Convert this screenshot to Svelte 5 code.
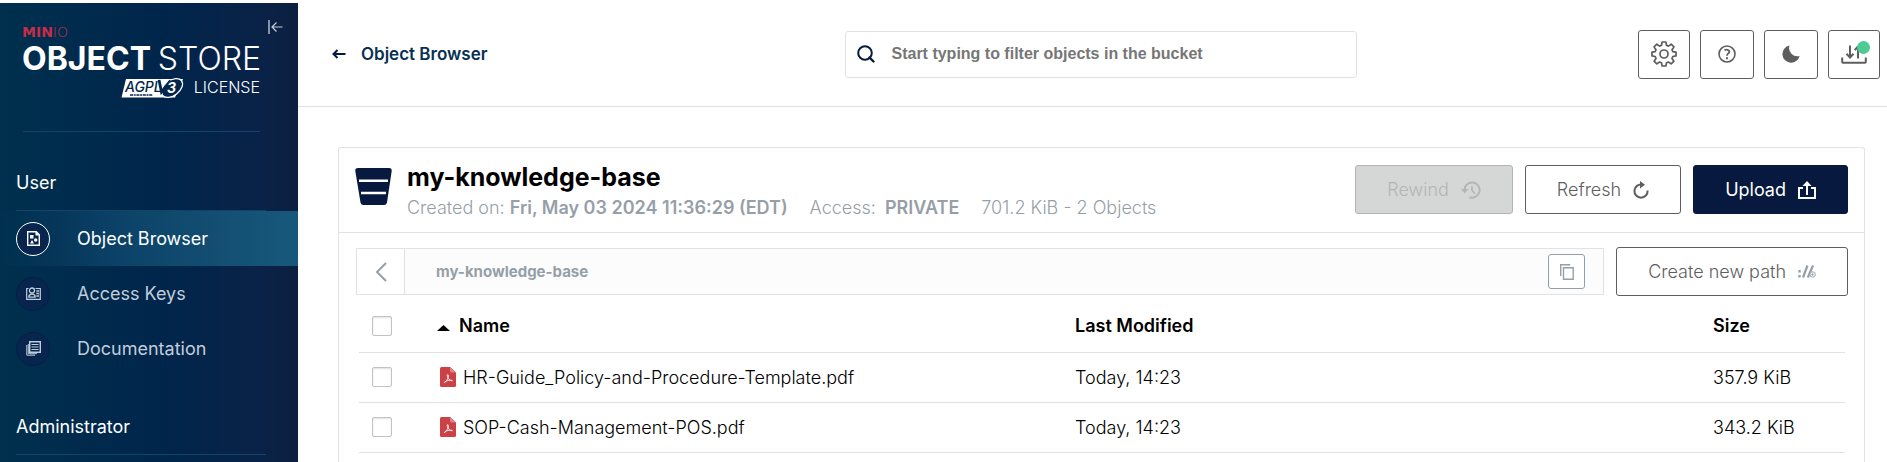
<script>
  const nav = [
    { label: 'Object Browser', icon: 'browser', active: true },
    { label: 'Access Keys', icon: 'keys', active: false },
    { label: 'Documentation', icon: 'docs', active: false }
  ];
  const files = [
    { name: 'HR-Guide_Policy-and-Procedure-Template.pdf', modified: 'Today, 14:23', size: '357.9 KiB' },
    { name: 'SOP-Cash-Management-POS.pdf', modified: 'Today, 14:23', size: '343.2 KiB' }
  ];
  let filter = $state('');
</script>

<div class="app">
  <aside class="sidebar">
    <div class="brand">
      <svg class="logo" viewBox="0 0 237 74" role="img" aria-label="MinIO Object Store, AGPLv3 License">
        <text x="-1" y="13" class="l-minio" fill="#c72c48"><tspan font-weight="700">MIN</tspan><tspan font-weight="200">IO</tspan></text>
        <text x="-1" y="46" class="l-big" font-weight="700">OBJECT</text>
        <text x="238" y="46" class="l-big" font-weight="300" text-anchor="end">STORE</text>
        <path d="M103 55h57l-8 18.500H98.500z" fill="#fff" />
        <ellipse cx="149" cy="64" rx="12" ry="7.500" transform="rotate(-38 149 64)" fill="#04264b" stroke="#fff" stroke-width="1.300" />
        <path d="M136 56l2.500 12 9-11.500" fill="none" stroke="#04264b" stroke-width="2.800" />
        <text x="102" y="68" class="l-agpl">AGPL</text>
        <text x="144" y="69" class="l-three">3</text>
        <path d="M107 71h23" stroke="#04264b" stroke-width="1.500" stroke-dasharray="3 .7 2 .7" />
        <text x="237" y="69" class="l-lic" text-anchor="end">LICENSE</text>
      </svg>
      <button class="collapse" aria-label="Collapse menu">
        <svg width="15" height="14" viewBox="0 0 15 14" fill="none" stroke="#c3ccd8"><path d="M1 0v14" stroke="#8493a8" stroke-width="2" /><path d="M14.500 7H4M8.500 2.500L4 7l4.500 4.500" stroke-width="1.200" /></svg>
      </button>
    </div>

    <h2>User</h2>
    <nav>
      {#each nav as item}
        <a href="#{item.icon}" class:active={item.active}>
          <span class="ring">
            {#if item.icon === 'browser'}
              <svg width="13" height="15" viewBox="0 0 13 15"><path d="M.7.700h8.600l3 3v10.600H.7z" fill="none" stroke="#fff" stroke-width="1.400" /><path d="M8.500.5v4h4M3 4h3.500v3.500H3zM3 12.500l2-3.500 2 3.500z" fill="#fff" /><circle cx="8.700" cy="9" r="1.700" fill="#fff" /></svg>
            {:else if item.icon === 'keys'}
              <svg width="15" height="13" viewBox="0 0 15 13" fill="none" stroke="#c1cddb"><path d="M2.500 1.500H.7v10.800h13.600V1.500H9.500" stroke-width="1.200" /><circle cx="6" cy="3.500" r="2.500" stroke-width="1.300" /><path d="M2.800 10.200c0-4 6.400-4 6.400 0z" stroke-width="1.300" /><path d="M10.300 4h2.700M10.300 6.500h2.700M10.300 9h2.700" stroke-width="1.700" /></svg>
            {:else}
              <svg width="15" height="15" viewBox="0 0 15 15" fill="none" stroke="#c1cddb"><path d="M3.700.700h10.600v10.600H3.700z" stroke-width="1.400" /><path d="M.8 4v10.200H9M2.300 3v9.700H11" stroke-width="1" /><path d="M5.500 3.500h7M5.500 6h7M5.500 8.500h7" stroke-width="1.200" /></svg>
            {/if}
          </span>
          {item.label}
        </a>
      {/each}
    </nav>

    <h2>Administrator</h2>
  </aside>

  <main>
    <header class="topbar">
      <a class="back" href="#browser">
        <svg width="14" height="10" viewBox="0 0 14 10" fill="none" stroke="#07193e" stroke-width="2"><path d="M13.500 5H2M5.500 1L1.500 5l4 4" /></svg>
        Object Browser
      </a>
      <label class="search">
        <svg width="18" height="18" viewBox="0 0 18 18" fill="none" stroke="#07193e" stroke-width="2"><circle cx="8" cy="8" r="6.800" /><path d="M12.500 12.500l4 4" stroke-width="2.400" stroke-linecap="round" /></svg>
        <input type="text" aria-label="Filter objects" placeholder="Start typing to filter objects in the bucket" bind:value={filter} />
      </label>
      <div class="tools">
        <button aria-label="Settings">
          <svg width="26" height="26" viewBox="0 0 26 26" fill="none" stroke="#5e5e5e" stroke-width="1.700" stroke-linejoin="round"><circle cx="13" cy="13" r="4" /><path d="M11.100 1h3.800l.6 3.300 1.900.8 2.800-1.900 2.700 2.700-1.900 2.800.8 1.900 3.200.6v3.700l-3.200.6-.8 1.900 1.900 2.800-2.700 2.700-2.800-1.900-1.900.8-.6 3.200h-3.800l-.6-3.200-1.900-.8-2.800 1.900-2.700-2.700L5 17.400l-.8-1.900-3.200-.6v-3.700l3.200-.6.8-1.900-1.900-2.800 2.700-2.700 2.800 1.900 1.900-.8z" /></svg>
        </button>
        <button aria-label="Help" class="mid">
          <svg width="18" height="18" viewBox="0 0 18 18" fill="none" stroke="#5e5e5e"><circle cx="9" cy="9" r="8" stroke-width="1.600" /><path d="M6.500 5.300c1.500-1 5-.9 4.800 1.500C11.100 8.600 9 8.300 9 10.700" stroke-width="1.800" /><path d="M8 12.200h2v2H8z" fill="#5e5e5e" stroke="none" /></svg>
        </button>
        <button aria-label="Dark mode" class="mid">
          <svg width="18" height="18" viewBox="0 0 18 18"><path d="M7.500.5A8.700 8.700 0 1 0 17.600 11 8.300 8.300 0 0 1 7.500.5z" fill="#5e5e5e" /></svg>
        </button>
        <button aria-label="Transfers" class="transfer">
          <svg width="26" height="20" viewBox="0 0 26 20" fill="none" stroke="#5e5e5e" stroke-width="2"><path d="M1.200 13.500V18q0 .8.800.8h22q.8 0 .8-.8v-4.500M9 1.500v12M5.500 9.700L9 13.500l3.500-3.800M17 14.500V2.500M13.700 6.200L17 2.500" /></svg>
          <i class="dot"></i>
        </button>
      </div>
    </header>

    <section class="card">
      <div class="bucket">
        <svg width="37" height="37" viewBox="0 0 37 37"><path d="M3 0h31q3 0 2.700 3L32 34.500q-.5 2.500-3 2.500H8.500q-2.500 0-3-2.500L.3 3Q0 0 3 0z" fill="#07193e" /><path d="M4 12.800h29M6 25h25" stroke="#fff" stroke-width="2.600" /></svg>
        <div class="info">
          <h1>my-knowledge-base</h1>
          <p>
            <span>Created on: <b>Fri, May 03 2024 11:36:29 (EDT)</b></span>
            <span class="access">Access: <b>PRIVATE</b></span>
            <span>701.2 KiB - 2 Objects</span>
          </p>
        </div>
        <div class="actions">
          <button class="btn" disabled>Rewind
            <svg width="20" height="18" viewBox="0 0 20 18" fill="none" stroke="#b4b4b4" stroke-width="2"><path d="M3.500 9.500A7.600 7.600 0 1 1 8.500 16.200" /><path d="M0 8h7.500L3.700 12.500z" fill="#b4b4b4" stroke="none" /><path d="M11 5v4.500l3 3" stroke-width="1.600" /></svg>
          </button>
          <button class="btn">Refresh
            <svg width="16" height="18" viewBox="0 0 16 18" fill="none" stroke="#5e5e5e" stroke-width="2"><path d="M9 3.500A6.600 6.600 0 1 0 14.600 9.500" /><path d="M7 0l5 3.700L7 7.500z" fill="#5e5e5e" stroke="none" /></svg>
          </button>
          <button class="btn primary">Upload
            <svg width="18" height="18" viewBox="0 0 18 18" fill="none" stroke="#fff" stroke-width="2"><path d="M5 7H1v10h16V7h-4M9 14V3" /><path d="M4.500 5L9 0l4.500 5z" fill="#fff" stroke="none" /></svg>
          </button>
        </div>
      </div>

      <div class="path">
        <div class="crumbs">
          <button class="up" aria-label="Go up"><svg width="12" height="20" viewBox="0 0 12 20" fill="none" stroke="#969fa8" stroke-width="2"><path d="M11 1L2 10l9 9" /></svg></button>
          <strong>my-knowledge-base</strong>
          <button class="copy" aria-label="Copy path"><svg width="14" height="16" viewBox="0 0 14 16" fill="none" stroke="#969fa8" stroke-width="1.400"><path d="M3.500 3.700h9.700v11.500H3.500z" /><path d="M.7 12V.700h9.500" /></svg></button>
        </div>
        <button class="btn">Create new path
          <svg width="18" height="13" viewBox="0 0 18 13" fill="none" stroke="#969fa8"><path d="M5 12.500L9.500.5M9.800 12.500L15 .5" stroke-width="2.200" /><path d="M.3 5h2.400v2.400H.3zM.3 10h2.400v2.400H.3z" fill="#969fa8" stroke="none" /><circle cx="14.600" cy="9.500" r="2.700" stroke-width="1" fill="#fff" /><path d="M13.200 9.500H16M14.600 8.100v2.800" stroke-width=".8" /></svg>
        </button>
      </div>

      <table>
        <colgroup><col class="c-check" /><col class="c-name" /><col class="c-mod" /><col class="c-size" /></colgroup>
        <thead>
          <tr>
            <th class="check"><input type="checkbox" aria-label="Select all" /></th>
            <th><svg class="sort" width="13" height="6" viewBox="0 0 13 6"><path d="M6.500 0L13 6H0z" /></svg>Name</th>
            <th>Last Modified</th>
            <th>Size</th>
          </tr>
        </thead>
        <tbody>
          {#each files as f}
            <tr>
              <td class="check"><input type="checkbox" aria-label="Select {f.name}" /></td>
              <td>
                <span class="file">
                  <svg width="16" height="20" viewBox="0 0 16 20"><path d="M1.500 0H10l6 5.500v13q0 1.500-1.500 1.500h-13Q0 20 0 18.500v-17Q0 0 1.500 0z" fill="#cb4145" /><path d="M10 0l6 5.500h-4.500Q10 5.500 10 4z" fill="#e08083" /><path d="M4.500 15.500c2-1 4.500-5 3.700-7.500-.5-1-1.400 0-.8 1.500.8 2.500 2.800 4.500 4.800 4.300 1-.5-2.500-1-4.700-.2-2 .6-3.500 1.500-3 1.900z" fill="none" stroke="#fff" stroke-width=".9" /></svg>
                  {f.name}
                </span>
              </td>
              <td>{f.modified}</td>
              <td>{f.size}</td>
            </tr>
          {/each}
        </tbody>
      </table>
    </section>
  </main>
</div>

<style>
  :global(body) { background: #fff; }
  .app, .app :global(*) { box-sizing: border-box; }
  .app {
    display: flex;
    min-height: 100vh;
    font-family: Inter, "Liberation Sans", sans-serif;
    font-size: 18px;
    color: #000;
  }
  button { font: inherit; cursor: pointer; padding: 0; background: none; border: 0; }
  svg { display: block; flex: none; }

  .sidebar {
    flex: 0 0 298px;
    margin-top: 3px;
    background: linear-gradient(90deg, #00304e 0%, #00254b 55%, #0a2247 88%, #0c1f40 100%);
    color: #fff;
  }
  .brand { position: relative; margin: 0 38px 0 23px; padding: 21px 0 33px; border-bottom: 1px solid #0f446b; }
  .logo { width: 100%; overflow: visible; }
  .l-minio { font-family: "DejaVu Sans", sans-serif; font-size: 14px; }
  .l-big { font-size: 32px; fill: #fff; }
  .l-agpl { font-size: 14px; font-style: italic; font-weight: 500; fill: #04264b; }
  .l-three { font-size: 14px; font-style: italic; font-weight: 700; fill: #fff; }
  .l-lic { font-size: 16px; font-weight: 300; fill: #fff; }
  .collapse { position: absolute; right: -23px; top: 17px; }
  h2 {
    margin: 0 32px 0 16px;
    padding: 40px 0 16px 0;
    border-bottom: 1px solid #0f446b;
    font-size: 18px;
    line-height: 22px;
    font-weight: 400;
  }
  nav { display: grid; grid-auto-rows: 55px; }
  nav a { display: flex; align-items: center; gap: 27px; padding-left: 16px; color: #c1cddb; text-decoration: none; }
  nav a.active { color: #fff; background: linear-gradient(90deg, #06395a00 0%, #0c4268 40%, #175779 95%); }
  .ring { width: 34px; height: 34px; border-radius: 50%; background: #07254d; border: 1px solid #061f47; display: grid; place-items: center; }
  .active .ring { border-color: #fff; }

  main { flex: 1; min-width: 0; display: flex; flex-direction: column; }
  .topbar { display: grid; grid-template-columns: 513fr 512px 522fr; align-items: center; height: 107px; padding: 2px 7px 0 34px; border-bottom: 1px solid #e2e2e2; }
  .back { display: flex; align-items: center; gap: 15px; color: #073052; font-size: 17px; font-weight: 600; text-decoration: none; }
  .search { display: flex; align-items: center; gap: 16px; height: 47px; padding: 0 11px; border: 1px solid #e2e2e2; border-radius: 3px; }
  .search input { flex: 1; min-width: 0; border: 0; outline: 0; padding: 0; background: none; font: 700 16px "Liberation Sans", Arial, sans-serif; }
  .search input::placeholder { color: #767676; opacity: 1; }
  .tools { display: flex; justify-content: flex-end; gap: 10px; }
  .tools button { position: relative; width: 52px; height: 49px; border: 1px solid #5e5e5e; border-radius: 3px; display: grid; place-items: center; }
  .tools .mid { width: 54px; }
  .dot { position: absolute; right: 9px; top: 10px; width: 13px; height: 13px; border-radius: 50%; background: #4ccb92; }

  .card { flex: 1; margin: 40px 22px 0 40px; border: 1px solid #e2e2e2; border-bottom: 0; border-radius: 3px 3px 0 0; }
  .bucket { display: flex; align-items: center; gap: 15px; height: 85px; padding: 0 16px 1px; border-bottom: 1px solid #e2e2e2; }
  .bucket > svg { margin-bottom: 7px; }
  .info { flex: 1; padding-top: 4px; }
  h1 { margin: 0; font-size: 25px; line-height: 32px; font-weight: 700; }
  p { margin: 0; display: flex; gap: 22px; line-height: 30px; color: #969fa8; font-weight: 300; }
  b { font-weight: 600; }
  .access b { margin-left: 4px; }
  .actions { display: flex; gap: 12px; }
  .btn { display: flex; align-items: center; justify-content: center; gap: 12px; height: 49px; padding: 0 31px; border: 1px solid #5e5e5e; border-radius: 3px; color: #5e5e5e; white-space: nowrap; font-weight: 300; }
  .btn:disabled { background: #d5d7d6; border-color: #b4b4b4; color: #b4b4b4; }
  .btn.primary { background: #07193e; border-color: #07193e; color: #fff; font-weight: 400; }

  .path { display: flex; align-items: center; gap: 12px; padding: 14px 16px 0 17px; }
  .crumbs { flex: 1; display: flex; align-items: center; height: 47px; padding-right: 18px; border: 1px solid #e2e2e2; background: #fcfcfc; color: #969fa8; font-size: 15px; }
  .up { width: 48px; height: 100%; display: grid; place-items: center; background: #fff; border-right: 1px solid #e2e2e2; }
  .crumbs strong { flex: 1; padding-left: 31px; font-weight: 700; }
  .copy { width: 37px; height: 35px; display: grid; place-items: center; border: 1px solid #969fa8; border-radius: 3px; background: #fff; }

  table { width: calc(100% - 39px); margin-left: 20px; border-collapse: collapse; table-layout: fixed; }
  .c-check { width: 78px; }
  .c-mod { width: 638px; }
  .c-size { width: 132px; }
  th, td { height: 50px; padding: 0; border-bottom: 1px solid #e2e2e2; text-align: left; vertical-align: middle; font-weight: 300; }
  th { height: 56px; padding-top: 4px; font-weight: 600; }
  .check { padding-left: 13px; }
  .sort { display: inline-block; vertical-align: 1px; margin-right: 9px; }
  .file { display: flex; align-items: center; gap: 7px; padding-left: 3px; }
  input[type="checkbox"] { appearance: none; display: block; width: 20px; height: 20px; margin: 0; border: 1px solid #c3c3c3; border-radius: 2px; background: #fff; box-shadow: inset 0 1px 2px #0000001f; }
</style>
